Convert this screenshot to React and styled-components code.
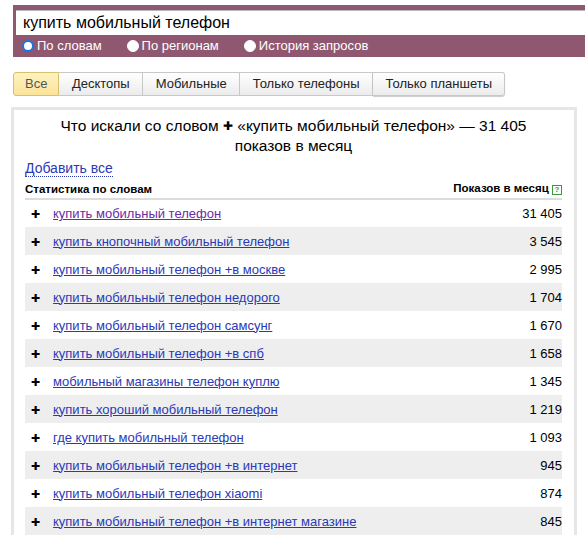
import styled, { createGlobalStyle } from 'styled-components';

const rows = [
  { text: 'купить мобильный телефон', count: '31 405', visited: true },
  { text: 'купить кнопочный мобильный телефон', count: '3 545' },
  { text: 'купить мобильный телефон +в москве', count: '2 995' },
  { text: 'купить мобильный телефон недорого', count: '1 704' },
  { text: 'купить мобильный телефон самсунг', count: '1 670' },
  { text: 'купить мобильный телефон +в спб', count: '1 658' },
  { text: 'мобильный магазины телефон куплю', count: '1 345' },
  { text: 'купить хороший мобильный телефон', count: '1 219' },
  { text: 'где купить мобильный телефон', count: '1 093' },
  { text: 'купить мобильный телефон +в интернет', count: '945' },
  { text: 'купить мобильный телефон xiaomi', count: '874' },
  { text: 'купить мобильный телефон +в интернет магазине', count: '845' },
];

const tabs = ['Все', 'Десктопы', 'Мобильные', 'Только телефоны', 'Только планшеты'];
const modes = ['По словам', 'По регионам', 'История запросов'];

const GlobalStyle = createGlobalStyle`
  body {
    margin: 0;
    background: #fff;
    font-family: "Liberation Sans", Arial, sans-serif;
    color: #000;
    overflow: hidden;
  }
`;

export default function App() {
  return (
    <>
      <GlobalStyle />
      <PageStyled>
        <SearchBarStyled>
          <SearchInput defaultValue="купить мобильный телефон" />
          <RadioRowStyled>
            {modes.map((m, i) => (
              <RadioLabel key={m}>
                <RadioDot checked={i === 0} />
                {m}
              </RadioLabel>
            ))}
          </RadioRowStyled>
        </SearchBarStyled>

        <TabsStyled>
          {tabs.map((t, i) => (
            <Tab key={t} active={i === 0}>{t}</Tab>
          ))}
        </TabsStyled>

        <PanelStyled>
          <TitleStyled>
            Что искали со словом <Plus>✚</Plus> «купить мобильный телефон» — 31 405
            <br />
            показов в месяц
          </TitleStyled>
          <AddAll href="#">Добавить все</AddAll>
          <TableStyled>
            <thead>
              <tr>
                <HeadCell>Статистика по словам</HeadCell>
                <HeadCell right>
                  Показов в месяц <HelpIcon>?</HelpIcon>
                </HeadCell>
              </tr>
            </thead>
            <tbody>
              {rows.map((r, i) => (
                <Row key={r.text} odd={i % 2 === 1}>
                  <WordCell>
                    <RowPlus>✚</RowPlus>
                    <WordLink href="#" visited={r.visited}>{r.text}</WordLink>
                  </WordCell>
                  <CountCell>{r.count}</CountCell>
                </Row>
              ))}
            </tbody>
          </TableStyled>
        </PanelStyled>
      </PageStyled>
    </>
  );
}

const PageStyled = styled.div`
  padding: 5px 0 0 13px;
`;
const SearchBarStyled = styled.div`
  background: #8f5870;
  padding: 5px 0 4px 3px;
`;
const SearchInput = styled.input`
  display: block;
  box-sizing: border-box;
  width: 100%;
  height: 25px;
  border: 0;
  border-top: 1px solid #b8b8b8;
  outline: 0;
  padding: 0 7px;
  font-family: "Liberation Sans", Arial, sans-serif;
  font-size: 16px;
  color: #000;
`;
const RadioRowStyled = styled.div`
  display: flex;
  gap: 25px;
  padding: 3px 0 0 6px;
`;
const RadioLabel = styled.label`
  display: flex;
  align-items: center;
  gap: 3px;
  color: #fff;
  font-size: 13px;
  line-height: 15px;
`;
const RadioDot = styled.span`
  box-sizing: border-box;
  width: 12px;
  height: 12px;
  border-radius: 50%;
  background: #fff;
  border: ${(p) => (p.checked ? '2px solid #1a73e8' : '1px solid #fff')};
`;
const TabsStyled = styled.div`
  display: flex;
  margin-top: 15px;
`;
const Tab = styled.div`
  height: 22px;
  line-height: 22px;
  padding: 0 ${(p) => (p.active ? '11px' : '12.5px')};
  font-size: 13px;
  color: ${(p) => (p.active ? '#555' : '#222')};
  border: 1px solid ${(p) => (p.active ? '#d8c070' : '#c8c8c8')};
  border-left-width: ${(p) => (p.active ? '1px' : '0')};
  background: ${(p) =>
    p.active
      ? 'linear-gradient(#fff2c0, #fbe39a)'
      : 'linear-gradient(#ffffff, #ececec)'};
  &:first-child {
    border-radius: 3px 0 0 3px;
  }
  &:last-child {
    border-radius: 0 3px 3px 0;
    box-shadow: 0 1px 1px rgba(0, 0, 0, 0.2);
  }
`;
const PanelStyled = styled.div`
  box-sizing: border-box;
  width: 566px;
  margin: 11px 0 0 -2px;
  border: 3px solid #e6e6e6;
  border-bottom: 0;
  padding: 6px 12px 0 11px;
`;
const TitleStyled = styled.div`
  text-align: center;
  font-size: 15.5px;
  line-height: 20px;
`;
const Plus = styled.span`
  font-size: 12px;
  vertical-align: 1px;
`;
const AddAll = styled.a`
  display: inline-block;
  margin-top: 4px;
  font-size: 14px;
  color: #2a39b8;
  text-decoration: none;
  border-bottom: 1px dotted #2a39b8;
  line-height: 16px;
`;
const TableStyled = styled.table`
  width: 100%;
  border-collapse: collapse;
  margin-top: 2px;
`;
const HeadCell = styled.th`
  text-align: ${(p) => (p.right ? 'right' : 'left')};
  font-size: 11.5px;
  font-weight: bold;
  padding: 3px 0 3px 0;
  border-bottom: 2px solid #dcdcdc;
  white-space: nowrap;
`;
const HelpIcon = styled.span`
  display: inline-block;
  box-sizing: border-box;
  width: 10px;
  height: 10px;
  border: 1px solid #3a9a3a;
  color: #3a9a3a;
  font-size: 8px;
  line-height: 8px;
  text-align: center;
  vertical-align: 0;
`;
const Row = styled.tr`
  height: 28px;
  background: ${(p) => (p.odd ? '#eeeeee' : '#fff')};
`;
const WordCell = styled.td`
  padding: 0 0 0 6px;
  font-size: 13px;
  white-space: nowrap;
`;
const RowPlus = styled.span`
  display: inline-block;
  width: 22px;
  font-size: 11px;
`;
const WordLink = styled.a`
  color: ${(p) => (p.visited ? '#6a2ba5' : '#2a39b8')};
  text-decoration: underline;
`;
const CountCell = styled.td`
  text-align: right;
  font-size: 13px;
  padding-right: 0;
`;
